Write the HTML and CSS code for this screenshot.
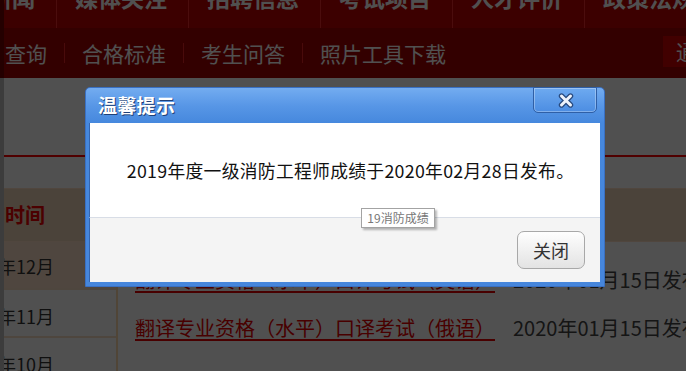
FILE: index.html
```html
<!DOCTYPE html>
<html lang="zh-CN">
<head>
<meta charset="utf-8">
<title>温馨提示</title>
<link rel="stylesheet" href="styles.css">
</head>
<body>
<div class="page">
  <div class="nav1">
    <div class="n1"><span>新闻</span></div>
    <div class="n1"><span>媒体关注</span></div>
    <div class="n1"><span>招聘信息</span></div>
    <div class="n1"><span>考试项目</span></div>
    <div class="n1"><span>人才评价</span></div>
    <div class="n1"><span>政策法规</span></div>
  </div>
  <div class="nav2">
    <span class="n2 first">查询</span><i class="sep"></i>
    <span class="n2">合格标准</span><i class="sep"></i>
    <span class="n2">考生问答</span><i class="sep"></i>
    <span class="n2">照片工具下载</span>
    <div class="site">通知</div>
  </div>
  <div class="rule"></div>
  <div class="thead"><span>发布时间</span></div>
  <div class="list">
    <div class="months">
      <div class="m cur"><span>2019年12月</span></div>
      <div class="m"><span>2019年11月</span></div>
      <div class="m"><span>2019年10月</span></div>
    </div>
    <div class="items">
      <div class="row"><a class="link">翻译专业资格（水平）口译考试（英语）</a><span class="date">2020年01月15日发布</span></div>
      <div class="row"><a class="link">翻译专业资格（水平）口译考试（俄语）</a><span class="date">2020年01月15日发布</span></div>
    </div>
  </div>
</div>

<div class="mask"></div>

<div class="dialog">
  <div class="dtitle">温馨提示</div>
  <div class="dclose">
    <svg width="18" height="15" viewBox="0 0 18 15">
      <path d="M4.5 3 L13.5 12 M13.5 3 L4.5 12" stroke="#294a7e" stroke-width="5.4" stroke-linecap="round" fill="none"/>
      <path d="M4.5 3 L13.5 12 M13.5 3 L4.5 12" stroke="#eef3fb" stroke-width="3" stroke-linecap="round" fill="none"/>
    </svg>
  </div>
  <div class="dbody">2019年度一级消防工程师成绩于2020年02月28日发布。</div>
  <div class="dfoot"><button class="btn">关闭</button></div>
</div>

<div class="tip">19消防成绩</div>
</body>
</html>
```

FILE: styles.css
```css
* { box-sizing: border-box; }

html, body {
  margin: 0;
  padding: 0;
}

body {
  width: 686px;
  height: 371px;
  overflow: hidden;
  position: relative;
  font-family: "Noto Sans CJK SC", "Noto Sans", sans-serif;
  background: linear-gradient(#730000 0, #730000 78px, #c0c0c0 78px);
}

.page {
  margin-left: 4px;
  width: 682px;
  height: 371px;
  overflow: hidden;
  background: #ffffff;
}

/* modal mask over the page */
.mask {
  position: absolute;
  left: 0;
  top: 0;
  width: 686px;
  height: 371px;
  background: rgba(0, 0, 0, 0.686);
}

/* top navigation */
.nav1 {
  height: 28px;
  display: flex;
  background: #bf0000;
  margin-left: -33px;
  white-space: nowrap;
}

.n1 {
  flex-shrink: 0;
  height: 28px;
  padding: 0 21px 0 18px;
  border-right: 1px solid #f02a2a;
  overflow: hidden;
}

.n1 span {
  display: block;
  margin-top: -18px;
  font-size: 23px;
  line-height: 30px;
  font-weight: bold;
  color: #ffffff;
}

.nav2 {
  height: 50px;
  display: flex;
  align-items: center;
  background: #a20000;
  padding-left: 1px;
  white-space: nowrap;
}

.n2 {
  flex-shrink: 0;
  padding: 0 17px;
  font-size: 21px;
  line-height: 26px;
  color: #ffffff;
}

.n2.first { padding-left: 0; }

.sep {
  flex-shrink: 0;
  width: 1px;
  height: 20px;
  background: #e82424;
}

.site {
  margin-left: auto;
  margin-top: -3px;
  flex-shrink: 0;
  width: 23px;
  height: 31px;
  overflow: hidden;
  background: #cf0000;
  padding-left: 13px;
  font-size: 21px;
  line-height: 31px;
  color: #fff;
}

/* content behind */
.rule {
  margin-top: 77px;
  height: 2px;
  background: #ff0000;
}

.thead {
  margin-top: 31px;
  height: 54px;
  background: #f0d4b8;
  border-top: 1px solid #ffe0c4;
  border-bottom: 1px solid #ffe0c4;
  white-space: nowrap;
  overflow: hidden;
}

.thead span {
  display: block;
  margin-left: -39px;
  font-size: 20px;
  font-weight: bold;
  line-height: 52px;
  color: #f00000;
}

.list {
  display: flex;
}

.months {
  width: 114px;
  flex-shrink: 0;
  border-right: 2px solid #ffdcb0;
}

.m {
  height: 48px;
  border-bottom: 2px solid #f8e0c4;
  overflow: hidden;
  white-space: nowrap;
}

.m.cur {
  height: 48px;
  background: #fce0ca;
}

.m span {
  display: block;
  margin-left: -46px;
  font-size: 18px;
  line-height: 48px;
  color: #333;
}

.m:not(.cur) span { line-height: 52px; }

.items {
  flex: 1;
  padding-top: 14px;
  padding-left: 17px;
  white-space: nowrap;
}

.row {
  height: 48px;
  display: flex;
  align-items: center;
}

.link {
  width: 378px;
  flex-shrink: 0;
  font-size: 20px;
  line-height: 26px;
  color: #e60000;
  text-decoration: underline;
  text-decoration-thickness: 1.5px;
  text-underline-offset: 3px;
}

.date {
  flex-shrink: 0;
  font-size: 20px;
  line-height: 26px;
  color: #444;
}

/* dialog */
.dialog {
  position: absolute;
  left: 85px;
  top: 87px;
  width: 520px;
  height: 200px;
  border: 1px solid #3a70c2;
  border-radius: 5px 5px 0 0;
  padding: 0 4px 4px 3px;
  background: linear-gradient(#73acf0 0, #5796e6 18px, #4688dd 35px, #4686dc 100%);
  display: flex;
  flex-direction: column;
}

.dtitle {
  height: 35px;
  padding: 6px 0 0 9px;
  font-size: 19px;
  line-height: 22px;
  font-weight: bold;
  color: #fff;
  text-shadow: 1px 1px 0 #1f3f76;
  letter-spacing: 0.3px;
}

.dclose {
  position: absolute;
  top: -1px;
  right: 7px;
  width: 64px;
  height: 26px;
  border: 1px solid #2f5fa6;
  border-radius: 0 0 5px 5px;
  background: linear-gradient(#6eaaf0, #4c8de2);
  box-shadow: inset 0 0 0 1px rgba(255, 255, 255, 0.3);
  display: flex;
  align-items: center;
  justify-content: center;
}

.dclose svg { display: block; margin-left: 2px; }

.dbody {
  height: 95px;
  background: #fff;
  border-left: 1px solid #3566b0;
  border-bottom: 1px solid #d8dde6;
  display: flex;
  align-items: center;
  justify-content: center;
  padding-left: 11px;
  font-size: 17.8px;
  letter-spacing: 0.3px;
  color: #111;
  white-space: nowrap;
}

.dfoot {
  flex: 1;
  background: #f4f4f4;
  border-left: 1px solid #3566b0;
  display: flex;
  align-items: center;
  justify-content: flex-end;
  padding-right: 15px;
}

.btn {
  width: 68px;
  height: 38px;
  border: 1px solid #a8a8a8;
  border-radius: 7px;
  background: linear-gradient(#fefefe, #e3e3e3);
  font-family: "Noto Sans CJK SC", sans-serif;
  font-size: 18px;
  color: #333;
  padding: 0;
  line-height: 36px;
}

/* tooltip */
.tip {
  position: absolute;
  left: 361px;
  top: 208px;
  width: 74px;
  height: 20px;
  border: 1px solid #a3a3a3;
  background: #fff;
  box-shadow: 2px 2px 2px rgba(0, 0, 0, 0.28);
  font-size: 12px;
  line-height: 18px;
  color: #777;
  text-align: center;
  white-space: nowrap;
}
```
